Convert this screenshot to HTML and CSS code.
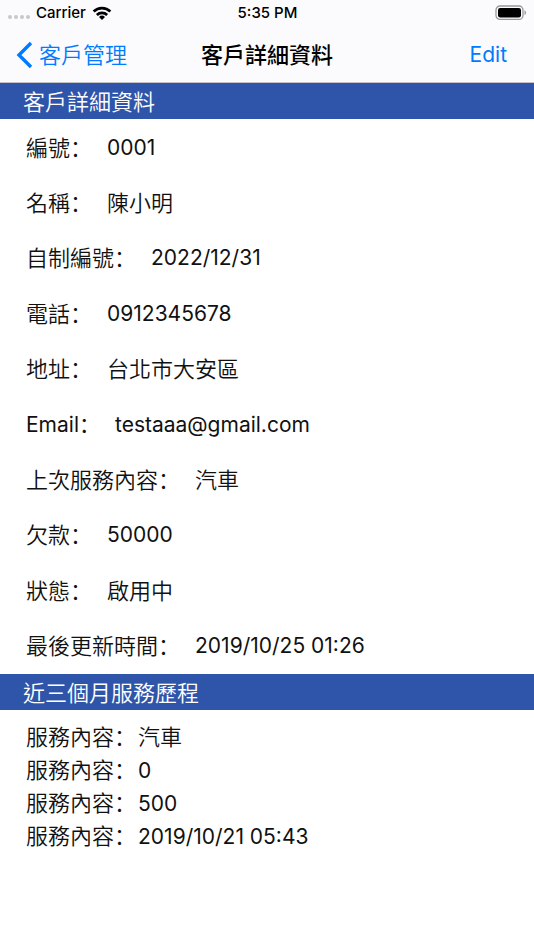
FILE: index.html
```
<!DOCTYPE html>
<html lang="zh-Hant">
<head>
<meta charset="utf-8">
<meta name="viewport" content="width=device-width, initial-scale=1">
<title>客戶詳細資料</title>
<link rel="stylesheet" href="styles.css">
</head>
<body>
<header class="top">
  <div class="status">
    <div class="carrier">
      <span class="signal"><i></i><i></i><i></i><i></i></span>
      <span>Carrier</span>
      <svg class="wifi" viewBox="0 0 20 14" aria-hidden="true">
        <path d="M.7 4.6a13.2 13.2 0 0 1 18.6 0l-1.9 2a10.5 10.5 0 0 0-14.8 0z"/>
        <path d="M3.9 7.9a8.7 8.7 0 0 1 12.2 0l-1.9 2a6 6 0 0 0-8.4 0z"/>
        <path d="M7 11a4.3 4.3 0 0 1 6 0l-3 3z"/>
      </svg>
    </div>
    <span class="time">5:35 PM</span>
    <svg class="battery" viewBox="0 0 32 16" aria-hidden="true">
      <rect x="1" y="1" width="27" height="13.4" rx="4" fill="none" stroke="#98989b" stroke-width="1.3"/>
      <rect x="3" y="3" width="23" height="9.4" rx="2.2"/>
      <path d="M29.5 5.3c2 .7 2 4.1 0 4.8z" fill="#98989b"/>
    </svg>
  </div>
  <nav class="nav">
    <a class="back" href="#">
      <svg viewBox="0 0 17 28" aria-hidden="true"><path d="M15 2 3 14l12 12"/></svg>
      <span>客戶管理</span>
    </a>
    <h1 class="title">客戶詳細資料</h1>
    <button class="edit" type="button">Edit</button>
  </nav>
</header>
<main>
  <section>
    <h2 class="bar">客戶詳細資料</h2>
    <dl class="details">
      <div class="row"><dt>編號<span class="colon" lang="zh-Hans">：</span></dt><dd class="latin">0001</dd></div>
      <div class="row"><dt>名稱<span class="colon" lang="zh-Hans">：</span></dt><dd>陳小明</dd></div>
      <div class="row"><dt>自制編號<span class="colon" lang="zh-Hans">：</span></dt><dd class="latin">2022/12/31</dd></div>
      <div class="row"><dt>電話<span class="colon" lang="zh-Hans">：</span></dt><dd class="latin">0912345678</dd></div>
      <div class="row"><dt>地址<span class="colon" lang="zh-Hans">：</span></dt><dd>台北市大安區</dd></div>
      <div class="row"><dt class="latin">Email<span class="colon" lang="zh-Hans">：</span></dt><dd class="latin">testaaa@gmail.com</dd></div>
      <div class="row"><dt>上次服務內容<span class="colon" lang="zh-Hans">：</span></dt><dd>汽車</dd></div>
      <div class="row"><dt>欠款<span class="colon" lang="zh-Hans">：</span></dt><dd class="latin">50000</dd></div>
      <div class="row"><dt>狀態<span class="colon" lang="zh-Hans">：</span></dt><dd>啟用中</dd></div>
      <div class="row"><dt>最後更新時間<span class="colon" lang="zh-Hans">：</span></dt><dd class="latin">2019/10/25 01:26</dd></div>
    </dl>
  </section>
  <section>
    <h2 class="bar">近三個月服務歷程</h2>
    <dl class="history">
      <div class="row"><dt>服務內容<span class="colon" lang="zh-Hans">：</span></dt><dd>汽車</dd></div>
      <div class="row"><dt>服務內容<span class="colon" lang="zh-Hans">：</span></dt><dd class="latin">0</dd></div>
      <div class="row"><dt>服務內容<span class="colon" lang="zh-Hans">：</span></dt><dd class="latin">500</dd></div>
      <div class="row"><dt>服務內容<span class="colon" lang="zh-Hans">：</span></dt><dd class="latin">2019/10/21 05:43</dd></div>
    </dl>
  </section>
</main>
</body>
</html>
```
FILE: styles.css
```
* { box-sizing: border-box; }

body {
  margin: 0;
  min-height: 100vh;
  background: #fff;
  color: #111;
  font: 22px/32px Inter, "Noto Sans CJK TC", sans-serif;
  font-weight: 350;
}

h1, h2, dl, dd { margin: 0; }

.top {
  background: #fbfbfd;
  border-bottom: 1px solid #c4c4c8;
}

.status {
  display: grid;
  grid-template-columns: 1fr auto 1fr;
  align-items: center;
  height: 26px;
  padding: 0 7px 0 8px;
  color: #000;
  font-size: 15px;
  line-height: 26px;
  font-weight: 500;
}

.carrier {
  display: flex;
  align-items: center;
  gap: 6px;
}

.signal {
  display: flex;
  gap: 2px;
  padding-top: 8px;
}

.signal i {
  width: 4px;
  height: 4px;
  border-radius: 50%;
  background: #c8c8ca;
}

.wifi { width: 20px; height: 14px; }

.battery { width: 32px; height: 16px; justify-self: end; }

.nav {
  display: grid;
  grid-template-columns: 1fr auto 1fr;
  align-items: center;
  height: 56px;
  padding: 2px 16px 0;
}

.back {
  display: flex;
  align-items: center;
  gap: 6px;
  color: #007aff;
  text-decoration: none;
}

.back svg {
  width: 17px;
  height: 28px;
  fill: none;
  stroke: #007aff;
  stroke-width: 3.4;
}

.title {
  color: #000;
  font-size: 22px;
  font-weight: 500;
}

.edit {
  justify-self: end;
  margin: 0 11px 0 0;
  padding: 0;
  border: 0;
  background: none;
  color: #007aff;
  font: inherit;
  font-size: 21px;
  font-weight: 400;
}

.bar {
  padding: 3px 23px 1px;
  background: #2f55ab;
  color: #fff;
  font-size: 22px;
  line-height: 32px;
  font-weight: 350;
}

.row { display: flex; }

.latin {
  font-size: 21px;
  font-weight: 400;
}

.colon { font-family: Inter, "Noto Sans CJK SC", sans-serif; }

.details {
  display: grid;
  grid-auto-rows: 1fr;
  min-height: 555px;
  padding: 1px 26px 0;
}

.details .row {
  align-items: center;
  gap: 15px;
}

.history { padding: 11px 26px; }

.history .row {
  gap: 2px;
  line-height: 33px;
}
```
